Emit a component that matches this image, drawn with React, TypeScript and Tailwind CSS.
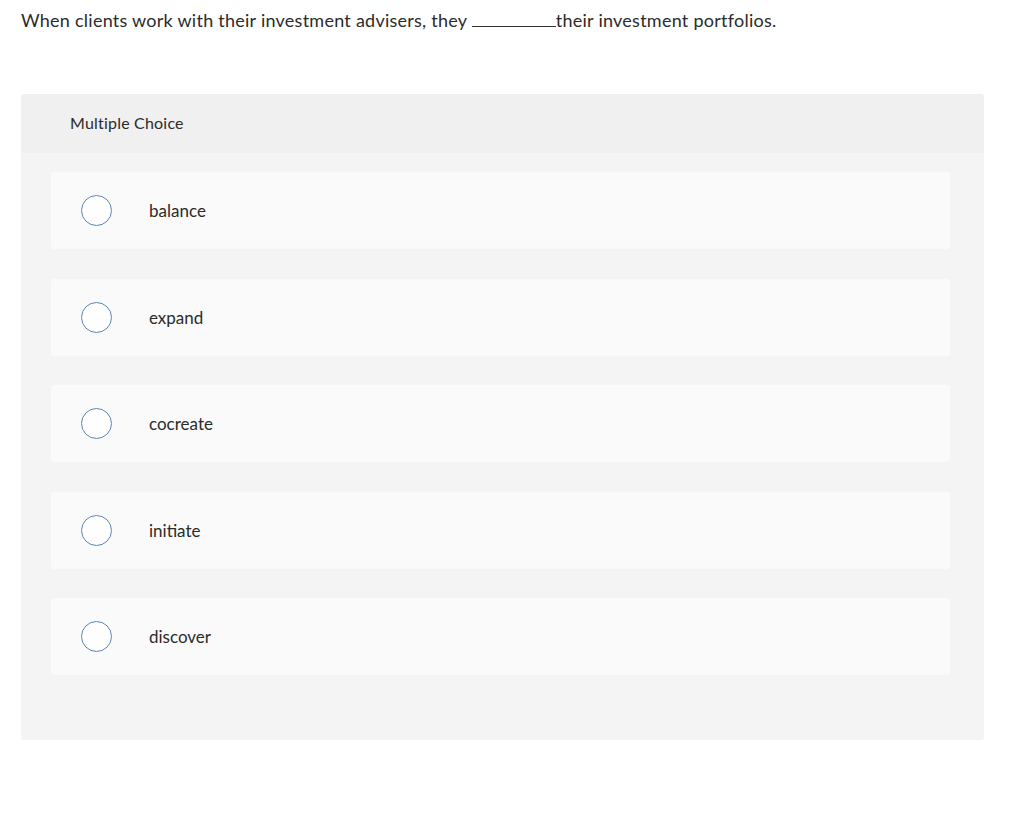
import React from 'react';

const options = ['balance', 'expand', 'cocreate', 'initiate', 'discover'];

export default function App() {
  return (
    <div className="min-h-screen bg-white text-[#2b2b2b]" style={{ fontFamily: 'Lato, "Open Sans", sans-serif' }}>
      <div className="pl-[21px] pt-[7px] text-[18px] leading-[26px] tracking-[0.25px]">
        When clients work with their investment advisers, they{' '}
        <span className="inline-block w-[84px] border-b border-[#333] align-baseline"></span>
        their investment portfolios.
      </div>

      <div className="mx-[21px] mt-[61px] w-[963px] rounded-[3px] bg-[#f4f4f4] pb-[65px]">
        <div className="flex h-[59px] items-center rounded-t-[3px] bg-[#f0f0f0] pl-[49px] pb-[1px] text-[16px] tracking-[0.2px]">
          Multiple Choice
        </div>
        <div className="flex flex-col gap-[29.5px] px-[30px] pt-[19px] pr-[34px]">
          {options.map(opt => (
            <div key={opt} className="flex h-[77px] items-center rounded-[3px] bg-[#fafafa] pl-[30px]">
              <span className="h-[31px] w-[31px] shrink-0 rounded-full border border-[#5b86b8] bg-white"></span>
              <span className="ml-[37px] pt-[1px] text-[17px]">{opt}</span>
            </div>
          ))}
        </div>
      </div>
    </div>
  );
}
